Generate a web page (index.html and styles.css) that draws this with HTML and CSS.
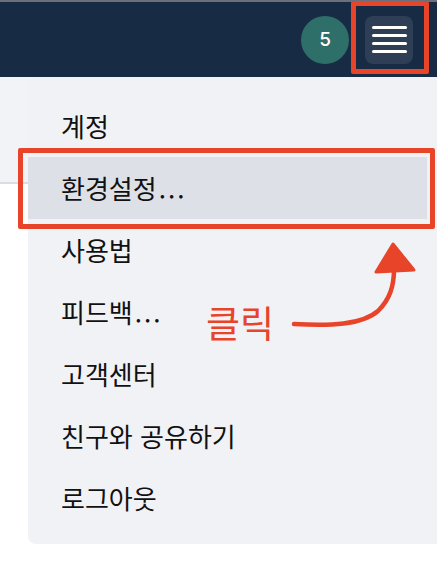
FILE: index.html
```html
<!DOCTYPE html>
<html lang="ko">
<head>
<meta charset="UTF-8" />
<title>메뉴</title>
<link rel="stylesheet" href="styles.css">
</head>
<body>

<div class="topbar">
  <div class="badge">5</div>
  <button class="menu-btn" aria-label="메뉴">
    <span></span><span></span><span></span><span></span>
  </button>
</div>

<div class="page">
  <div class="subbar"></div>

  <ul class="dropdown">
    <li>계정</li>
    <li class="active">환경설정<span class="dots">...</span></li>
    <li>사용법</li>
    <li>피드백<span class="dots">...</span></li>
    <li>고객센터</li>
    <li>친구와 공유하기</li>
    <li>로그아웃</li>
  </ul>

  <!-- 안내용 표시 -->
  <div class="mark mark-btn"></div>
  <div class="mark mark-item"></div>
  <div class="click-label">클릭</div>
  <svg class="arrow" width="140" height="100" viewBox="280 235 140 100">
    <path d="M294 323 C330 325 362 324 378 310 C390 298 394 285 394 268" fill="none" stroke="#e8442a" stroke-width="4.5" stroke-linecap="round"/>
    <polygon points="393,243 376,271 414,269" fill="#e8442a" stroke="#e8442a" stroke-width="3" stroke-linejoin="round"/>
  </svg>
</div>

</body>
</html>
```

FILE: styles.css
```css
body {
  margin: 0;
  background-color: #fff;
  font-family: "Noto Sans CJK KR", "Noto Sans", sans-serif;
  color: #111;
  overflow: hidden;
}
.topbar {
  height: 75px;
  border-top: 2px solid #6b707c;
  background-color: #172b45;
  display: flex;
  justify-content: flex-end;
  align-items: center;
  gap: 16px;
  padding-right: 24px;
}
.badge {
  width: 48px;
  height: 48px;
  border-radius: 50%;
  background-color: #2f6f6a;
  color: #fff;
  font-family: "Inter", sans-serif;
  font-weight: 500;
  font-size: 19px;
  display: flex;
  align-items: center;
  justify-content: center;
}
.menu-btn {
  width: 48px;
  height: 48px;
  border: none;
  border-radius: 8px;
  background-color: #2e3e55;
  display: flex;
  flex-direction: column;
  align-items: center;
  justify-content: center;
  gap: 5px;
  padding: 0;
}
.menu-btn span {
  display: block;
  width: 35px;
  height: 3px;
  border-radius: 2px;
  background-color: #fff;
}
.page {
  position: relative;
  height: 495px;
}
.subbar {
  height: 105px;
  background-color: #f2f3f6;
  border-bottom: 2px solid #dadde2;
}
.dropdown {
  position: absolute;
  top: 0;
  left: 28px;
  right: -10px;
  margin: 0;
  padding: 18px 0 15px;
  list-style: none;
  background-color: #f1f2f6;
  border-bottom-left-radius: 8px;
}
.dropdown li {
  height: 62px;
  line-height: 62px;
  padding-left: 33px;
  font-size: 26px;
}
.dropdown li.active {
  background-color: #dde1e7;
  margin-right: 20px;
}
.dots {
  letter-spacing: 2px;
  margin-left: 2px;
}
.mark {
  position: absolute;
  border: 5px solid #e8442a;
  border-radius: 2px;
}
.mark-btn {
  left: 351px;
  top: -76px;
  width: 68px;
  height: 63px;
}
.mark-item {
  left: 18px;
  top: 71px;
  width: 407px;
  height: 71px;
}
.click-label {
  position: absolute;
  left: 206px;
  top: 218px;
  font-size: 37px;
  font-weight: 400;
  color: #e8442a;
}
.arrow {
  position: absolute;
  left: 280px;
  top: 159px;
}
```
